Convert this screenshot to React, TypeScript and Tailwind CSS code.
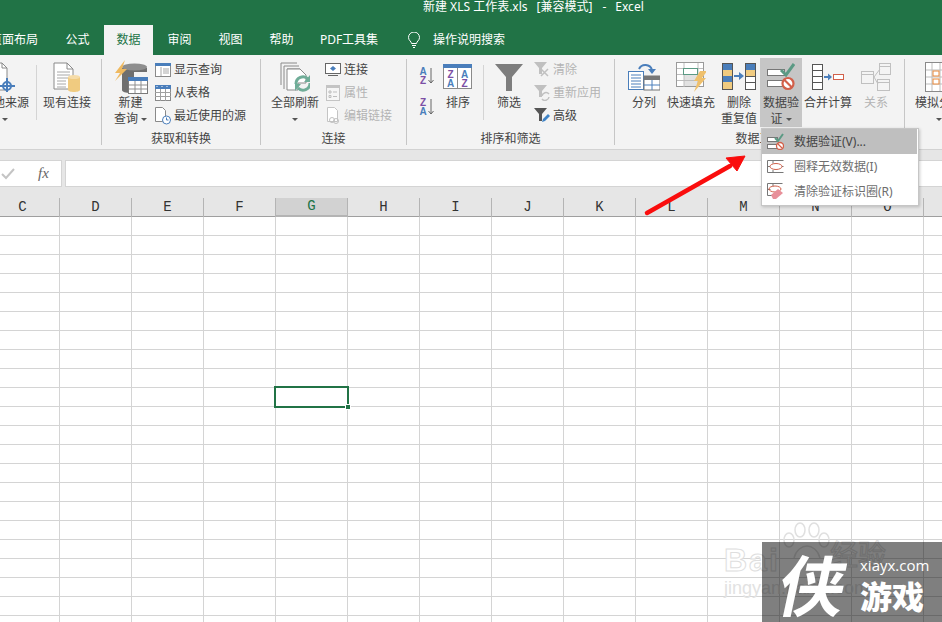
import type { ReactNode } from "react";

const columns = ["C", "D", "E", "F", "G", "H", "I", "J", "K", "L", "M", "N", "O", "P"];
const rows = Array.from({ length: 22 }, (_, i) => i);

function Svg({ w, h, children }: { w: number; h: number; children: ReactNode }) {
  return (
    <svg width={w} height={h} viewBox={`0 0 ${w} ${h}`} className="shrink-0 block">
      {children}
    </svg>
  );
}

function Caret({ className = "" }: { className?: string }) {
  return <span className={`inline-block w-0 h-0 border-x-[3px] border-x-transparent border-t-[3px] border-t-[#555] ${className}`} />;
}

function Group({ className, label, children }: { className: string; label?: string; children: ReactNode }) {
  return (
    <div className={`flex flex-col h-[86px] mt-1 border-r border-[#c6c6c6] shrink-0 ${className}`}>
      <div className="flex flex-1 min-h-0">{children}</div>
      <div className="h-[16px] leading-[20px] text-center text-[#444] whitespace-nowrap">{label}</div>
    </div>
  );
}

function Large({
  className,
  icon,
  lines,
  caret,
  disabled,
}: {
  className: string;
  icon: ReactNode;
  lines: string[];
  caret?: boolean;
  disabled?: boolean;
}) {
  return (
    <div className={`flex flex-col items-center shrink-0 h-[68px] ${disabled ? "text-[#b4b4b4]" : "text-[#444]"} ${className}`}>
      <div className="h-[36px] flex items-center justify-center w-full">{icon}</div>
      {lines.map((line, i) => (
        <div key={line} className="h-[16px] leading-[16px] whitespace-nowrap flex items-center">
          {line}
          {caret && i === lines.length - 1 && lines.length > 1 && <Caret className="ml-[3px]" />}
        </div>
      ))}
      {caret && lines.length === 1 && (
        <div className="h-[16px] flex items-center">
          <Caret />
        </div>
      )}
    </div>
  );
}

function SmallList({ className, items }: { className: string; items: { icon: ReactNode; text: string; disabled?: boolean }[] }) {
  return (
    <div className={`flex flex-col -mt-px shrink-0 ${className}`}>
      {items.map((item) => (
        <div key={item.text} className={`h-[23px] flex items-center gap-[3px] whitespace-nowrap ${item.disabled ? "text-[#b4b4b4]" : "text-[#444]"}`}>
          <div className="w-4 flex justify-center">{item.icon}</div>
          {item.text}
        </div>
      ))}
    </div>
  );
}

function Sep({ className }: { className: string }) {
  return <div className={`w-px h-[55px] mt-[6px] bg-[#d4d4d4] shrink-0 ${className}`} />;
}

const IconTargetDoc = (
  <Svg w={30} h={30}>
    <path d="M8 1h8l5 5v22H8z" fill="#fff" stroke="#8a8a8a" />
    <path d="M16 1v5h5" fill="none" stroke="#8a8a8a" />
    <circle cx="21" cy="24" r="4" fill="#fff" stroke="#4a7ebb" strokeWidth="2" />
    <path d="M21 16v16M13 24h16" stroke="#4a7ebb" strokeWidth="2" />
  </Svg>
);

const IconExisting = (
  <Svg w={28} h={30}>
    <path d="M1 1h13l6 6v20H1z" fill="#fff" stroke="#8a8a8a" />
    <path d="M14 1v6h6" fill="none" stroke="#8a8a8a" />
    <path d="M4 10h13M4 13h13M4 16h13M4 19h9M4 22h9M4 25h9" stroke="#a8a8a8" />
    <path d="M15 15v13c0 1 3 2 6 2s6-1 6-2V15z" fill="#f0cb80" />
    <ellipse cx="21" cy="15" rx="6" ry="2" fill="#f6dca8" />
  </Svg>
);

const IconQuery = (
  <Svg w={34} h={34}>
    <path d="M8 8v22c0 2 4 3 8 3h4V12h13V8z" fill="#6f6f6f" />
    <ellipse cx="20.500" cy="7" rx="12.500" ry="3.500" fill="#8e8e8e" />
    <path d="M11 0L1 13h5L1 21 13 9H8l3-9z" fill="#efb95f" />
    <rect x="14.500" y="17.500" width="19" height="16" fill="#fff" stroke="#7a7a7a" />
    <rect x="14" y="17" width="20" height="4" fill="#4a7ebb" />
    <path d="M21 21v12M27 21v12M15 25h18M15 29h18" stroke="#8f8f8f" />
  </Svg>
);

const IconShowQuery = (
  <Svg w={16} h={14}>
    <rect x=".5" y=".5" width="15" height="13" fill="#fff" stroke="#8a8a8a" />
    <rect width="16" height="3" fill="#4a7ebb" />
    <path d="M6 4v9M8 6h6M8 8h6M8 10h6" stroke="#a8a8a8" />
  </Svg>
);

const IconFromTable = (
  <Svg w={16} h={16}>
    <rect x=".5" y=".5" width="15" height="15" fill="#fff" stroke="#8a8a8a" />
    <rect width="16" height="4" fill="#4a7ebb" />
    <path d="M5.500 4v12M10.500 4v12M0 7.500h16M0 11.500h16" stroke="#a0a0a0" />
    <path d="M2 1v1M7 1v1M12 1v1" stroke="#fff" />
  </Svg>
);

const IconRecent = (
  <Svg w={16} h={18}>
    <path d="M.5.5h7l3 3v11h-10z" fill="#fff" stroke="#8a8a8a" />
    <circle cx="11.500" cy="13" r="4" fill="#fff" stroke="#4a7ebb" />
    <path d="M11.500 10.500V13h2" fill="none" stroke="#4a7ebb" />
  </Svg>
);

const IconRefresh = (
  <Svg w={30} h={30}>
    <path d="M1 1h16M1 1v22M4 4h15M4 4v23M7 7h13" fill="none" stroke="#8a8a8a" />
    <path d="M7 7h13l6 6v8H18v7H7z" fill="#fff" stroke="#8a8a8a" />
    <path d="M16 22a7 7 0 0 1 12-5M30 21a7 7 0 0 1-12 5" fill="none" stroke="#70ad98" strokeWidth="3" />
    <path d="M30 13v7h-6zM15 29v-7h6z" fill="#70ad98" />
  </Svg>
);

const IconConnect = (
  <Svg w={16} h={14}>
    <rect x=".5" y=".5" width="15" height="10" fill="#fff" stroke="#666" />
    <path d="M8 3l3 2.500L8 8 5 5.500z" fill="#4a7ebb" />
    <path d="M3 12.500h10" stroke="#666" />
  </Svg>
);

const IconProps = (
  <Svg w={14} h={16}>
    <rect x=".5" y=".5" width="13" height="15" fill="#f6f6f6" stroke="#c4c4c4" />
    <rect width="14" height="3" fill="#c4c4c4" />
    <path d="M3 6h2v2H3zM3 10.500h2v2H3zM7 7h4M7 11.500h4" fill="none" stroke="#bdbdbd" />
  </Svg>
);

const IconEditLink = (
  <Svg w={14} h={17}>
    <path d="M1.500.5h7l3 3v11h-10z" fill="#fff" stroke="#c4c4c4" />
    <circle cx="6" cy="13" r="2.500" fill="none" stroke="#c0c0c0" />
    <circle cx="10" cy="14" r="2.500" fill="none" stroke="#c0c0c0" />
  </Svg>
);

function SortIcon({ top, bottom, a, b }: { top: string; bottom: string; a: string; b: string }) {
  return (
    <Svg w={16} h={18}>
      <text x="4" y="8" textAnchor="middle" fontSize="10" fontWeight="700" fill={a} fontFamily="Liberation Sans">{top}</text>
      <text x="4" y="17" textAnchor="middle" fontSize="10" fontWeight="700" fill={b} fontFamily="Liberation Sans">{bottom}</text>
      <path d="M12 1v15M9.500 13l2.500 3 2.500-3" fill="none" stroke="#666" />
    </Svg>
  );
}

const IconSortBig = (
  <Svg w={30} h={26}>
    <rect x=".5" y=".5" width="28" height="24" fill="#fff" stroke="#8a8a8a" />
    <rect width="29" height="4" fill="#4a7ebb" />
    <path d="M14.500 4v21" stroke="#8a8a8a" />
    <g fontSize="10" fontWeight="700" fontFamily="Liberation Sans" textAnchor="middle">
      <text x="7.500" y="13.500" fill="#7c4fa5">Z</text>
      <text x="7.500" y="23" fill="#4a7ebb">A</text>
      <text x="21.500" y="13.500" fill="#4a7ebb">A</text>
      <text x="21.500" y="23" fill="#7c4fa5">Z</text>
    </g>
  </Svg>
);

const IconFilter = (
  <Svg w={28} h={27}>
    <path d="M0 0h28L17 13v14h-6V13z" fill="#7d7d7d" />
  </Svg>
);

const IconClear = (
  <Svg w={16} h={15}>
    <path d="M0 0h13L8 6v6H5V6z" fill="#c0c0c0" />
    <path d="M7 7l7 7M14 7l-7 7" stroke="#c0c0c0" strokeWidth="1.500" />
  </Svg>
);

const IconReapply = (
  <Svg w={16} h={16}>
    <path d="M0 0h13L8 6v6H5V6z" fill="#c0c0c0" />
    <path d="M8 11a4 4 0 0 1 7-2M15 12a4 4 0 0 1-7 2" fill="none" stroke="#c0c0c0" strokeWidth="1.500" />
  </Svg>
);

const IconAdvanced = (
  <Svg w={16} h={15}>
    <path d="M0 0h13L8 6v7H5V6z" fill="#555" />
    <path d="M8 14l1-3 5-5 2 2-5 5z" fill="#3f83c6" />
  </Svg>
);

const IconSplit = (
  <Svg w={32} h={28}>
    <path d="M11 6a7 7 0 0 1 13 1" fill="none" stroke="#4a7ebb" strokeWidth="2" />
    <path d="M20 6l4 5 4-5z" fill="#4a7ebb" />
    <rect x=".5" y="8.500" width="15" height="18" fill="#fff" stroke="#4a7ebb" />
    <path d="M3 12h10M3 15h10M3 18h10M3 21h10M3 24h10" stroke="#4a7ebb" />
    <rect x="16" y="13" width="16" height="14" fill="#fff" stroke="#777" />
    <rect x="16" y="13" width="16" height="4" fill="#777" />
    <path d="M24 17v10M16 22h16" stroke="#4a7ebb" />
  </Svg>
);

const IconFlash = (
  <Svg w={30} h={30}>
    <rect x=".5" y=".5" width="27" height="24" fill="#fff" stroke="#9a9a9a" />
    <rect x="8" y="12" width="14" height="12" fill="#e2e2e2" />
    <path d="M8 1v24M22 1v24M1 6.500h26M1 12.500h26M1 18.500h26" stroke="#bdbdbd" />
    <rect x="7.500" y="6.500" width="14" height="6" fill="#fff" stroke="#5b9a84" />
    <path d="M24 9h7l-5 7h4L18 30l4-11h-4z" fill="#efc06c" />
  </Svg>
);

const IconDuplicates = (
  <Svg w={34} h={28}>
    <rect x=".5" y=".5" width="10" height="26" fill="#fff" stroke="#555" />
    <rect x="1" y="1" width="9" height="6" fill="#4a7ebb" />
    <rect x="1" y="7" width="9" height="6" fill="#f0cb80" />
    <rect x="1" y="13" width="9" height="6" fill="#4a7ebb" />
    <rect x="1" y="19" width="9" height="7" fill="#f0cb80" />
    <rect x="23.500" y=".5" width="10" height="26" fill="#fff" stroke="#555" />
    <rect x="24" y="1" width="9" height="6" fill="#4a7ebb" />
    <rect x="24" y="7" width="9" height="6" fill="#f0cb80" />
    <path d="M24 13.500h9M24 19.500h9" stroke="#555" />
    <path d="M12 13h6" stroke="#4a7ebb" strokeWidth="2" />
    <path d="M17 9l5 4-5 4z" fill="#4a7ebb" />
  </Svg>
);

const IconValidate = (
  <Svg w={28} h={28}>
    <rect x=".5" y="6.500" width="17" height="6" fill="#fff" stroke="#777" />
    <rect x=".5" y="17.500" width="17" height="6" fill="#fff" stroke="#777" />
    <path d="M14 7l5 5 8-11" fill="none" stroke="#5b9a84" strokeWidth="3" />
    <circle cx="21" cy="20.500" r="5.500" fill="#fff" stroke="#d2604a" strokeWidth="2.200" />
    <path d="M17 16.500l8 8" stroke="#d2604a" strokeWidth="2.200" />
  </Svg>
);

const IconConsolidate = (
  <Svg w={32} h={26}>
    <rect x=".5" y=".5" width="10" height="25" fill="#fff" stroke="#555" />
    <path d="M1 6.500h9M1 12.500h9M1 18.500h9" stroke="#555" />
    <path d="M12 13h5" stroke="#4a7ebb" strokeWidth="2" />
    <path d="M16 9.500l4 3.500-4 3.500z" fill="#4a7ebb" />
    <rect x="21.500" y="10.500" width="10" height="5" fill="#fff" stroke="#d2604a" />
  </Svg>
);

const IconRelations = (
  <Svg w={30} h={28}>
    <rect x=".5" y="8.500" width="12" height="12" fill="#f4f4f4" stroke="#c0c0c0" />
    <rect x="18.500" y=".5" width="11" height="11" fill="#f4f4f4" stroke="#c0c0c0" />
    <rect x="16.500" y="16.500" width="12" height="11" fill="#f4f4f4" stroke="#c0c0c0" />
    <path d="M13 14l6-8M13 14l4 7M1 11.500h11M19 3.500h10M17 19.500h11" stroke="#c0c0c0" />
  </Svg>
);

const IconWhatIf = (
  <Svg w={28} h={30}>
    <rect x=".5" y=".5" width="27" height="29" fill="#fff" stroke="#8a8a8a" />
    <path d="M7 1v28M15 1v28M1 8h26M1 15h26M1 22h26" stroke="#bdbdbd" />
    <rect x="8" y="9" width="6" height="5" fill="#fff" stroke="#e8883a" />
    <rect x="8" y="17" width="6" height="5" fill="#fff" stroke="#e8883a" />
  </Svg>
);

const MenuIconValidate = (
  <Svg w={17} h={17}>
    <rect x=".5" y="4.500" width="10" height="4" fill="#fff" stroke="#777" />
    <rect x=".5" y="11.500" width="10" height="4" fill="#fff" stroke="#777" />
    <path d="M8 5l3 3 5-7" fill="none" stroke="#5b9a84" strokeWidth="2" />
    <circle cx="13" cy="13" r="3.500" fill="#fff" stroke="#d2604a" strokeWidth="1.300" />
    <path d="M10.500 10.500l5 5" stroke="#d2604a" strokeWidth="1.300" />
  </Svg>
);

const MenuIconCircle = (
  <Svg w={17} h={14}>
    <path d="M.5.5h16M.5 6.500h3M13.500 6.500h3M.5 12.500h16M.5.5v12M6 .5v3M6 10v3" fill="none" stroke="#777" />
    <ellipse cx="9" cy="6.500" rx="6" ry="3" fill="#fff" stroke="#d2604a" />
  </Svg>
);

const MenuIconClear = (
  <Svg w={17} h={17}>
    <path d="M.5.5h15M.5 6.500h3M.5 12.500h5M.5.5v12M6 .5v3" fill="none" stroke="#777" />
    <ellipse cx="8" cy="6" rx="6" ry="3" fill="none" stroke="#d2604a" />
    <path d="M4 12l7-6 5 4-7 6H6z" fill="#e8909a" />
  </Svg>
);

export default function App() {
  return (
    <div className="relative w-[942px] h-[622px] overflow-hidden bg-white text-[12px] font-['Noto_Sans','Noto_Sans_CJK_SC',sans-serif]">
      {/* title + tabs */}
      <div className="bg-[#217346] h-[55px] text-white">
        <div className="h-[25px] pl-[423px] leading-[13px] flex items-start whitespace-pre">
          <span>新建 XLS 工作表.xls</span>
          <span className="ml-[9px]">[兼容模式]</span>
          <span className="ml-[10px]">-</span>
          <span className="ml-[9px]">Excel</span>
        </div>
        <div className="flex h-[30px] items-center -ml-[24px] whitespace-nowrap">
          <div className="w-[76px] text-center">页面布局</div>
          <div className="w-[51px] text-center">公式</div>
          <div className="w-[49px] mx-px h-full bg-[#f3f3f3] text-[#217346] flex items-center justify-center">数据</div>
          <div className="w-[51px] text-center">审阅</div>
          <div className="w-[51px] text-center">视图</div>
          <div className="w-[51px] text-center">帮助</div>
          <div className="w-[84px] text-center">PDF工具集</div>
          <div className="ml-[17px] mr-[14px] w-[11px]">
            <Svg w={12} h={17}>
              <path d="M3.500 11.500c0-2-3-3-3-6a5.500 5.500 0 0 1 11 0c0 3-3 4-3 6z" fill="none" stroke="#fff" />
              <path d="M4 13.500h4M5 15.500h2" stroke="#fff" />
            </Svg>
          </div>
          <div>操作说明搜索</div>
        </div>
      </div>

      {/* ribbon */}
      <div className="flex h-[94px] bg-[#f3f3f3] overflow-hidden">
        <Group className="w-[102px]">
          <Large className="w-[48px] -ml-[19px]" icon={<div className="-ml-[8px]">{IconTargetDoc}</div>} lines={["其他来源"]} caret />
          <Sep className="ml-[7px]" />
          <Large className="w-[48px] ml-[6px]" icon={IconExisting} lines={["现有连接"]} />
        </Group>
        <Group className="w-[159px]" label="获取和转换">
          <Large className="w-[37px] ml-[10px]" icon={IconQuery} lines={["新建", "查询"]} caret />
          <SmallList
            className="ml-[6px]"
            items={[
              { icon: IconShowQuery, text: "显示查询" },
              { icon: IconFromTable, text: "从表格" },
              { icon: IconRecent, text: "最近使用的源" },
            ]}
          />
        </Group>
        <Group className="w-[146px]" label="连接">
          <Large className="w-[48px] ml-[10px]" icon={IconRefresh} lines={["全部刷新"]} caret />
          <SmallList
            className="ml-[6px]"
            items={[
              { icon: IconConnect, text: "连接" },
              { icon: IconProps, text: "属性", disabled: true },
              { icon: IconEditLink, text: "编辑链接", disabled: true },
            ]}
          />
        </Group>
        <Group className="w-[208px]" label="排序和筛选">
          <div className="ml-[12px] w-[15px] flex flex-col gap-[13px] pt-[8px] shrink-0">
            <SortIcon top="A" bottom="Z" a="#4a7ebb" b="#7c4fa5" />
            <SortIcon top="Z" bottom="A" a="#7c4fa5" b="#4a7ebb" />
          </div>
          <Large className="w-[30px] ml-[9px]" icon={IconSortBig} lines={["排序"]} />
          <Sep className="ml-[10px]" />
          <Large className="w-[28px] ml-[11px]" icon={IconFilter} lines={["筛选"]} />
          <SmallList
            className="ml-[11px]"
            items={[
              { icon: IconClear, text: "清除", disabled: true },
              { icon: IconReapply, text: "重新应用", disabled: true },
              { icon: IconAdvanced, text: "高级" },
            ]}
          />
        </Group>
        <Group className="w-[290px]" label="数据工具">
          <Large className="w-[36px] ml-[11px]" icon={IconSplit} lines={["分列"]} />
          <Large className="w-[48px] ml-[5px]" icon={IconFlash} lines={["快速填充"]} />
          <Large className="w-[36px] ml-[6px]" icon={IconDuplicates} lines={["删除", "重复值"]} />
          <Large className="w-[42px] ml-[3px] -mt-px pt-px h-[69px] bg-[#c6c6c6]" icon={IconValidate} lines={["数据验", "证"]} caret />
          <Large className="w-[48px] ml-[2px]" icon={IconConsolidate} lines={["合并计算"]} />
          <Large className="w-[30px] ml-[9px]" icon={IconRelations} lines={["关系"]} disabled />
        </Group>
        <Group className="w-[60px]">
          <Large className="w-[48px] ml-[10px]" icon={IconWhatIf} lines={["模拟分析"]} caret />
        </Group>
      </div>

      {/* formula bar */}
      <div className="h-[49px] bg-[#e6e6e6] border-t border-[#d2d2d2] pt-[10px] flex gap-[3px]">
        <div className="w-[62px] h-[27px] bg-white border border-[#d4d4d4] border-l-0 flex items-center">
          <svg width="14" height="12" viewBox="0 0 14 12" className="ml-[1px]">
            <path d="M1 6l4 4 8-9" fill="none" stroke="#c4c4c4" strokeWidth="2" />
          </svg>
          <span className="ml-[23px] font-['Liberation_Serif',serif] italic text-[15px] text-[#666]">fx</span>
        </div>
        <div className="flex-1 h-[27px] bg-white border border-[#d4d4d4] border-r-0" />
      </div>

      {/* column headers */}
      <div className="flex h-[19px] bg-[#e6e6e6] border-b border-[#9f9f9f] font-['Liberation_Mono',monospace] text-[14px] text-[#333]">
        {columns.map((col, i) => (
          <div
            key={col}
            className={`shrink-0 h-[19px] flex items-center justify-center ${i === 0 ? "w-[60px] pr-[14px]" : "w-[72px]"} ${
              col === "G" ? "bg-[#d2d2d2] text-[#217346] border-b-2 border-[#217346]" : ""
            } border-r border-[#b4b4b4]`}
          >
            {col}
          </div>
        ))}
      </div>

      {/* cells */}
      <div>
        {rows.map((r) => (
          <div key={r} className="flex h-[19px]">
            {columns.map((col, i) => (
              <div key={col} className={`shrink-0 h-[19px] border-r border-b border-[#d4d4d4] ${i === 0 ? "w-[60px]" : "w-[72px]"}`} />
            ))}
          </div>
        ))}
      </div>

      {/* selected cell */}
      <div className="absolute left-[274px] top-[386px] w-[75px] h-[22px] border-2 border-[#217346]">
        <div className="absolute -right-[4px] -bottom-[4px] w-[6px] h-[6px] bg-[#217346] border border-white" />
      </div>

      {/* dropdown */}
      <div className="absolute left-[761px] top-[128px] w-[158px] h-[78px] bg-white border border-[#c6c6c6] shadow-[1px_1px_3px_rgba(0,0,0,0.2)] text-[#6e6e6e]">
        <div className="h-[25px] mr-px flex items-center bg-[#bfbfbf] text-[#444]">
          <div className="w-[32px] pl-[5px]">{MenuIconValidate}</div>
          数据验证(V)...
        </div>
        <div className="h-[25px] flex items-center">
          <div className="w-[32px] pl-[5px]">{MenuIconCircle}</div>
          圈释无效数据(I)
        </div>
        <div className="h-[25px] flex items-center">
          <div className="w-[32px] pl-[5px]">{MenuIconClear}</div>
          清除验证标识圈(R)
        </div>
      </div>

      {/* red annotation arrow */}
      <svg className="absolute left-[640px] top-[150px]" width="110" height="70" viewBox="0 0 110 70">
        <path d="M7 63L90 16" stroke="#fa0d0d" strokeWidth="4.500" strokeLinecap="round" />
        <path d="M105 6L86 8l11 13z" fill="#fa0d0d" stroke="#fa0d0d" />
      </svg>

      {/* baidu watermark */}
      <div className="absolute left-[724px] top-[544px] pointer-events-none">
        <svg className="absolute left-[56px] -top-[22px]" width="50" height="40" viewBox="0 0 50 40">
          <g fill="none" stroke="#e0e0e0" strokeWidth="1.500">
            <ellipse cx="9" cy="18" rx="5" ry="7" />
            <ellipse cx="20" cy="8" rx="5" ry="7" />
            <ellipse cx="34" cy="8" rx="5" ry="7" />
            <ellipse cx="44" cy="18" rx="5" ry="7" />
            <path d="M14 36c2-8 8-12 13-12s11 4 13 12" />
          </g>
        </svg>
        <div className="text-[32px] font-bold leading-[32px] tracking-[2px] whitespace-nowrap text-white [-webkit-text-stroke:1px_#dedede] font-['Liberation_Sans',sans-serif]">Bai</div>
        <div className="mt-[1px] text-[18px] leading-[22px] whitespace-nowrap text-[#e2e2e2] font-['Liberation_Sans',sans-serif]">jingyan.baidu.com</div>
      </div>
      <div className="absolute left-[830px] top-[536px] text-[28px] leading-[36px] text-white [-webkit-text-stroke:1px_#dedede]">经验</div>

      {/* site logo */}
      <div className="absolute left-[762px] top-[542px] w-[180px] h-[80px] bg-black/50 text-white">
        <div className="absolute left-[19px] top-[4px] text-[66px] leading-[72px] font-bold font-['Noto_Sans_CJK_SC',sans-serif] -skew-x-12">侠</div>
        <div className="absolute left-[98px] top-[14px] text-[15px] leading-[18px] font-['Open_Sans',sans-serif]">xiayx.com</div>
        <div className="absolute left-[98px] top-[35px] text-[32px] leading-[36px] font-black font-['Noto_Sans_CJK_SC',sans-serif]">游戏</div>
      </div>
    </div>
  );
}
